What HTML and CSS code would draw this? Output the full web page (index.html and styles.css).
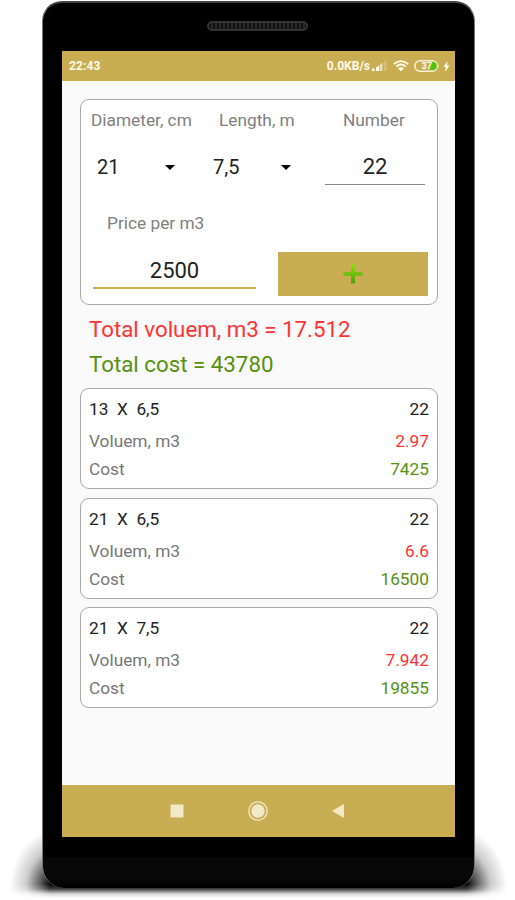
FILE: index.html
```html
<!DOCTYPE html>
<html lang="en">
<head>
    <meta charset="UTF-8">
    <meta name="viewport" content="width=device-width, initial-scale=1.0">
    <link rel="stylesheet" href="styles.css">
    <title>Volume calculator</title>
</head>
<body>

    <div class="phone">
        <div class="shadow"></div>
        <div class="body">
            <div class="speaker"></div>

            <div class="screen">
                <div class="status-bar">
                    <span class="time">22:43</span>
                    <span class="speed">0.0KB/s</span>
                    <svg class="signal" width="16" height="12" viewBox="0 0 16 12">
                        <path d="M0 8.5h2.500V11H0z M4 7.500l3-2V11H4z" fill="#fffbe9"/>
                        <path d="M7.500 5L10.500 2.500V11h-3z" fill="#fffbe9" opacity=".65"/>
                        <path d="M12 1.500L14.500 0V11H12z" fill="#fffbe9" opacity=".25"/>
                    </svg>
                    <svg class="wifi" width="16" height="12" viewBox="0 0 16 12">
                        <g fill="none" stroke="#fffbe9" stroke-width="1.700">
                            <path d="M.8 4.200Q8-2 15.200 4.200"/>
                            <path d="M3.200 6.600Q8 2.400 12.800 6.600"/>
                        </g>
                        <path d="M5 8.300Q8 6 11 8.300L8 11.500z" fill="#fffbe9"/>
                    </svg>
                    <svg class="battery" width="26" height="12" viewBox="0 0 26 12">
                        <rect x=".8" y=".8" width="22.500" height="10.400" rx="5.200" fill="none" stroke="#f8f0d2" stroke-width="1.500"/>
                        <path d="M24.300 4v4q1.500-2 0-4z" fill="#f8f0d2"/>
                        <circle cx="18.800" cy="6" r="4" fill="#4fc40c"/>
                        <text x="7.500" y="9.300" class="battery-text">37</text>
                    </svg>
                    <svg width="7" height="11" viewBox="0 0 7 11">
                        <path d="M4.500 0L.5 6h2.300L2 11l4.500-6.500H4z" fill="#fffbe9"/>
                    </svg>
                </div>

                <div class="content">
                    <div class="card form">
                        <div class="labels">
                            <span class="label-diameter">Diameter, cm</span>
                            <span class="label-length">Length, m</span>
                            <span class="label-number">Number</span>
                        </div>
                        <div class="values">
                            <div class="spinner">21<i class="arrow"></i></div>
                            <div class="spinner">7,5<i class="arrow"></i></div>
                            <div class="field number">22</div>
                        </div>
                        <div class="price-label">Price per m3</div>
                        <div class="price-row">
                            <div class="field price">2500</div>
                            <div class="add">
                                <svg width="20" height="20" viewBox="0 0 20 20">
                                    <defs>
                                        <linearGradient id="plus" x1="0" y1="0" x2="0" y2="1">
                                            <stop offset="0" stop-color="#8be00c"/>
                                            <stop offset="1" stop-color="#4f9e0c"/>
                                        </linearGradient>
                                    </defs>
                                    <path d="M8 .5h4v7.500h7.500v3.800H12v7.700H8v-7.700H.5V8H8z" fill="url(#plus)"/>
                                </svg>
                            </div>
                        </div>
                    </div>

                    <div class="total red">Total voluem, m3 = 17.512</div>
                    <div class="total green">Total cost = 43780</div>

                    <div class="card item">
                        <div class="row size"><span>13&nbsp; X&nbsp; 6,5</span><span>22</span></div>
                        <div class="row"><span>Voluem, m3</span><span class="red">2.97</span></div>
                        <div class="row"><span>Cost</span><span class="green">7425</span></div>
                    </div>
                    <div class="card item">
                        <div class="row size"><span>21&nbsp; X&nbsp; 6,5</span><span>22</span></div>
                        <div class="row"><span>Voluem, m3</span><span class="red">6.6</span></div>
                        <div class="row"><span>Cost</span><span class="green">16500</span></div>
                    </div>
                    <div class="card item">
                        <div class="row size"><span>21&nbsp; X&nbsp; 7,5</span><span>22</span></div>
                        <div class="row"><span>Voluem, m3</span><span class="red">7.942</span></div>
                        <div class="row"><span>Cost</span><span class="green">19855</span></div>
                    </div>
                </div>

                <div class="nav-bar">
                    <svg width="20" height="20" viewBox="0 0 20 20">
                        <rect x="3.500" y="3.500" width="13" height="13" fill="#f2e9c9"/>
                    </svg>
                    <svg width="20" height="20" viewBox="0 0 20 20">
                        <circle cx="10" cy="10" r="9.200" fill="none" stroke="#f2e9c9" stroke-width="1.300"/>
                        <circle cx="10" cy="10" r="6.700" fill="#f2e9c9"/>
                    </svg>
                    <svg width="20" height="20" viewBox="0 0 20 20">
                        <path d="M3 10L15 3v14z" fill="#f2e9c9"/>
                    </svg>
                </div>
            </div>
        </div>
    </div>

</body>
</html>
```
FILE: styles.css
```css
* {
    box-sizing: border-box;
}

body {
    margin: 0;
    background: #fff;
    font-family: Roboto, "Liberation Sans", sans-serif;
    overflow: hidden;
}

/* Phone */
.phone {
    position: relative;
    width: 515px;
    height: 900px;
    padding: 1px 0 0 42px;
}

/* Soft shadow under the phone */
.shadow {
    position: absolute;
    left: 0;
    top: 832px;
    width: 515px;
    height: 66px;
    background:
        linear-gradient(#000, #000) 60px 0 / 397px 66px no-repeat,
        radial-gradient(ellipse 50px 60px at 60px 56px, #000 20%, rgba(0, 0, 0, 0.6) 42%, rgba(0, 0, 0, 0.2) 68%, transparent) 0 0 / 60px 66px no-repeat,
        radial-gradient(ellipse 50px 60px at 0 56px, #000 20%, rgba(0, 0, 0, 0.6) 42%, rgba(0, 0, 0, 0.2) 68%, transparent) 457px 0 / 58px 66px no-repeat;
    -webkit-mask-image: linear-gradient(#000 52px, rgba(0, 0, 0, 0.75) 57px, rgba(0, 0, 0, 0.15) 62px, transparent 66px);
    mask-image: linear-gradient(#000 52px, rgba(0, 0, 0, 0.75) 57px, rgba(0, 0, 0, 0.15) 62px, transparent 66px);
}

.body {
    position: relative;
    width: 433px;
    height: 887px;
    padding: 19px 19px 0;
    border: 1px solid #777;
    border-top: 2px solid #444;
    border-bottom: 0;
    border-radius: 20px 20px 22px 22px;
    background: linear-gradient(#000 854px, #080808 854px, #080808 876px, #000);
}

.speaker {
    width: 101px;
    height: 10px;
    margin: -1px 0 20px 145px;
    border: 2px solid #333;
    border-radius: 5px;
    background: repeating-linear-gradient(90deg, #111 0 2px, #292929 2px 4px);
}

.screen {
    display: flex;
    flex-direction: column;
    width: 393px;
    height: 786px;
    background: #fafafa;
}

.status-bar {
    display: flex;
    align-items: center;
    height: 30px;
    padding: 0 5px 0 7px;
    background: #c9ad53;
    color: #fffbe9;
    font-size: 12px;
    font-weight: bold;
}

.time {
    margin-right: auto;
    letter-spacing: 0.1px;
}

.speed {
    margin-right: 2px;
}

.signal {
    margin-right: 5px;
}

.wifi {
    margin-right: 5px;
}

.battery {
    margin-right: 3px;
}

.battery-text {
    font-size: 9px;
    fill: #fffbe9;
}

/* Content */
.content {
    flex: 1;
    padding: 18px 17px 0 18px;
}

.card {
    border: 1px solid #aaa;
    border-radius: 9px;
    background: #fff;
}

.form {
    height: 206px;
    padding: 0 9px 0 10px;
    color: #808080;
    font-size: 17.3px;
}

.labels {
    display: flex;
    height: 40px;
    line-height: 40px;
}

.label-diameter {
    width: 128px;
}

.label-length {
    width: 124px;
}

.values {
    display: flex;
    height: 54px;
    line-height: 54px;
}

.spinner {
    display: flex;
    align-items: center;
    width: 116px;
    padding-left: 6px;
    color: #222;
    font-size: 20px;
}

.arrow {
    margin: 0 32px 0 auto;
    border: 5px solid transparent;
    border-top-color: #000;
    border-bottom: 0;
}

.field {
    color: #222;
    font-size: 22px;
    text-align: center;
}

.number {
    width: 100px;
    height: 45px;
    margin-left: 2px;
    border-bottom: 1px solid #888;
}

.price-label {
    height: 58px;
    padding-left: 16px;
    line-height: 58px;
}

.price-row {
    display: flex;
    justify-content: space-between;
}

.price {
    width: 163px;
    height: 37px;
    margin-left: 2px;
    border-bottom: 2px solid #c9ad53;
    line-height: 38px;
}

.add {
    display: flex;
    align-items: center;
    justify-content: center;
    width: 150px;
    height: 44px;
    background: #c9ad53;
}

.total {
    height: 35px;
    padding-left: 9px;
    font-size: 22.3px;
    line-height: 35px;
}

.form + .total {
    margin-top: 7px;
}

.red {
    color: #f33;
}

.green {
    color: #57910f;
}

.item {
    height: 101px;
    margin-bottom: 8.600px;
    padding: 5px 8px 0;
    color: #777;
    font-size: 17.3px;
}

.total + .item {
    margin-top: 6px;
}

.row {
    display: flex;
    justify-content: space-between;
    height: 28px;
    line-height: 28px;
}

.size {
    height: 33px;
    line-height: 31px;
    color: #222;
}

.nav-bar {
    display: flex;
    align-items: center;
    justify-content: center;
    gap: 61px;
    height: 52px;
    padding-right: 1px;
    background: #c9ad53;
}
```
